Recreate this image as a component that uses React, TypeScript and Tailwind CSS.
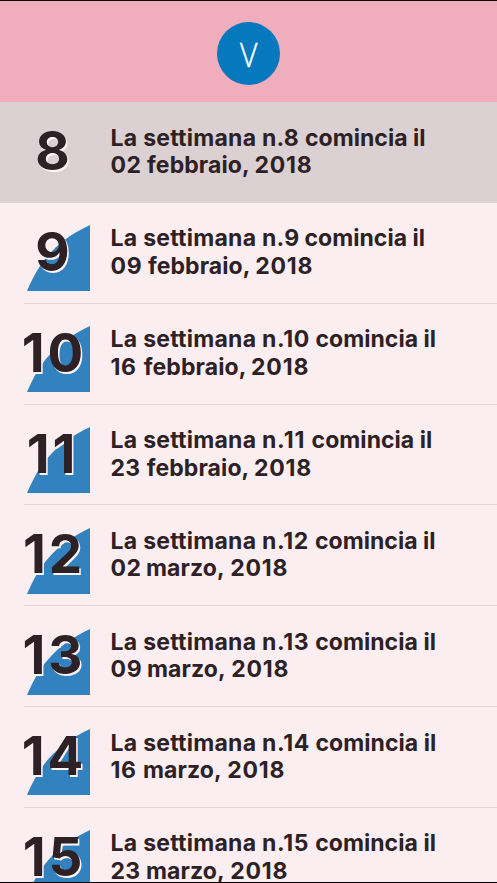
type Week = {
  n: number;
  day: string;
  month: string;
  digits: string;
  numberWidth: string;
  dayWidth: string;
  monthWidth: string;
};

const febbraio = "w-[107.3px] tracking-[0.1px]";
const marzo = "w-[84.2px] tracking-[0.1px]";
const single = "pl-0";
const double = "pl-[3px] tracking-[3px]";

const weeks: Week[] = [
  { n: 8, day: "02", month: "febbraio,", digits: single, numberWidth: "w-[43px] tracking-[0.3px]", dayWidth: "w-[36.5px] tracking-[0.3px]", monthWidth: febbraio },
  { n: 9, day: "09", month: "febbraio,", digits: single, numberWidth: "w-[42.5px] tracking-[0.3px]", dayWidth: "w-[37.3px] tracking-[0.6px]", monthWidth: febbraio },
  { n: 10, day: "16", month: "febbraio,", digits: double, numberWidth: "w-[53.5px] tracking-[0.7px]", dayWidth: "w-[33.2px] tracking-[0.6px]", monthWidth: febbraio },
  { n: 11, day: "23", month: "febbraio,", digits: "tracking-[3px]", numberWidth: "w-[49.7px] tracking-[0.9px]", dayWidth: "w-[36.1px] tracking-[0.2px]", monthWidth: febbraio },
  { n: 12, day: "02", month: "marzo,", digits: double, numberWidth: "w-[53px] tracking-[0.7px]", dayWidth: "w-[35.4px] tracking-[0.3px]", monthWidth: marzo },
  { n: 13, day: "09", month: "marzo,", digits: double, numberWidth: "w-[53.3px] tracking-[0.7px]", dayWidth: "w-[36.4px] tracking-[0.6px]", monthWidth: marzo },
  { n: 14, day: "16", month: "marzo,", digits: double, numberWidth: "w-[53.6px] tracking-[0.7px]", dayWidth: "w-[32.4px] tracking-[0.6px]", monthWidth: marzo },
  { n: 15, day: "23", month: "marzo,", digits: double, numberWidth: "w-[53.3px] tracking-[0.7px]", dayWidth: "w-[35.4px] tracking-[0.2px]", monthWidth: marzo },
];

function Header() {
  return (
    <header className="flex h-[102px] shrink-0 justify-center border-t border-black bg-[#f0aebc] pt-[21.3px]">
      <div className="flex size-[62.5px] items-center justify-center rounded-full bg-[#0678be]">
        <span className="mt-[3px] scale-x-90 font-['Open_Sans',sans-serif] text-[33.5px] leading-none font-light text-white [-webkit-text-stroke:0.4px_#fff]">V</span>
      </div>
    </header>
  );
}

function WeekRow({ week, selected }: { week: Week; selected: boolean }) {
  return (
    <li className={selected ? "h-[100.85px] shrink-0 bg-[#dbd0d2]" : "h-[100.85px] shrink-0 pl-6"}>
      <div className={selected ? "flex h-full pl-6" : "flex h-full border-b border-[#e4d3da]"}>
        <div className="relative w-[66px] shrink-0">
          {!selected && (
            <svg viewBox="0 0 63 66" className="absolute top-[22.3px] right-0 h-[66px] w-[63px]">
              <path d="M0 66 C11 40 26 17 63 0 V66 Z" fill="#3182bf" />
            </svg>
          )}
          <span className={`absolute top-[17px] left-[-12px] w-[81px] text-center text-[53px] leading-[64px] font-bold [text-shadow:1.5px_1.5px_0_#fff4f5] ${week.digits}`}>
            {week.n}
          </span>
        </div>
        <div className="pt-[22.5px] pl-[20.6px] text-[23px] leading-[27.5px] font-[650] whitespace-nowrap">
          <p className="flex">
            <span className="w-[151.3px] tracking-[0.25px]">La settimana </span>
            <span className={week.numberWidth}>n.{week.n} </span>
            <span className="tracking-[0.05px]">comincia il</span>
          </p>
          <p className="flex">
            <span className={week.dayWidth}>{week.day} </span>
            <span className={week.monthWidth}>{week.month} </span>
            <span className="tracking-[0.8px]">2018</span>
          </p>
        </div>
      </div>
    </li>
  );
}

export default function App() {
  return (
    <main className="flex h-[883px] w-[497px] flex-col overflow-hidden border-b border-black bg-[#fbeef0] font-['Inter',sans-serif] text-[#2d2125]">
      <Header />
      <ul className="flex flex-col">
        {weeks.map((week) => (
          <WeekRow key={week.n} week={week} selected={week.n === 8} />
        ))}
      </ul>
    </main>
  );
}
